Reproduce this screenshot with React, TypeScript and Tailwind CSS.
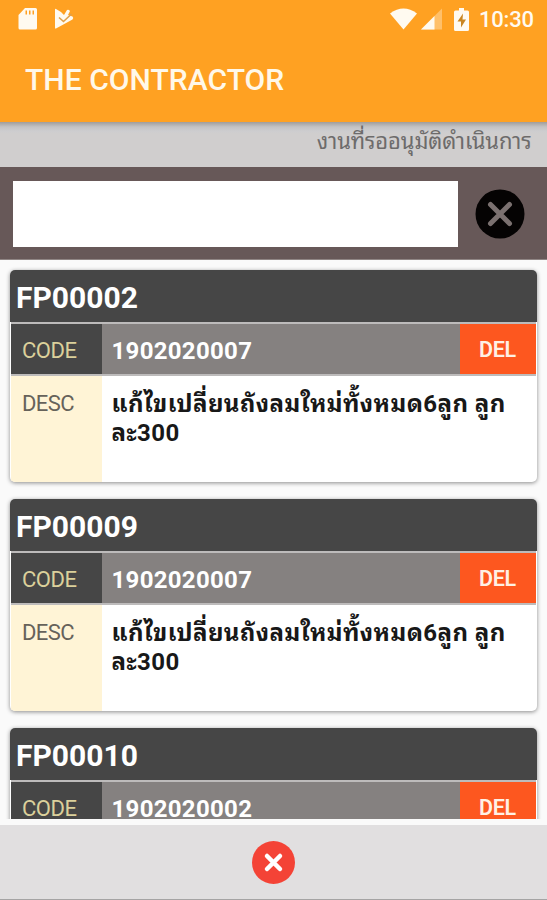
import React, { useState } from 'react';

interface Job {
  id: string;
  code: string;
  desc: string[];
}

const initialJobs: Job[] = [
  { id: 'FP00002', code: '1902020007', desc: ['แก้ไขเปลี่ยนถังลมใหม่ทั้งหมด6ลูก ลูก', 'ละ300'] },
  { id: 'FP00009', code: '1902020007', desc: ['แก้ไขเปลี่ยนถังลมใหม่ทั้งหมด6ลูก ลูก', 'ละ300'] },
  { id: 'FP00010', code: '1902020002', desc: ['แก้ไขเปลี่ยนถังลมใหม่ทั้งหมด6ลูก ลูก', 'ละ300'] },
];

const StatusBar: React.FC = () => (
  <div className="flex h-[38px] items-center pr-3.5 pl-[18px] text-[#fffaf0]">
    <svg className="h-[22px] w-[19px]" viewBox="0 0 19 22" fill="currentColor">
      <path fillRule="evenodd" d="M7 0h10.500a1.500 1.500 0 0 1 1.500 1.500v18.500a1.500 1.500 0 0 1-1.500 1.500H2A1.500 1.500 0 0 1 .5 20V7zM7.500 2.500v4H9v-4zM11 2.500v4h1.500v-4zM14.500 2.500v4H16v-4z" />
    </svg>
    <svg className="ml-[17px] h-[22px] w-5" viewBox="0 0 20 22" fill="none">
      <path fill="currentColor" d="M1 1.500Q1 .5 2 1l5 3 3 3 3-5q1-.7 2 0l1 1-2 4 4.500 1.500q1.500 1.500 0 3L2 20.500q-1 .5-1-1z" />
      <path d="M5 9.500l4.500 4L17.500 6" stroke="#e0a04a" strokeWidth="1.600" />
    </svg>
    <svg className="ml-auto h-[22px] w-[27px]" viewBox="0 0 27 22" fill="currentColor">
      <path d="M0 5.500Q13.500-4.500 27 5.500L13.500 21.500z" />
    </svg>
    <svg className="ml-1 h-[22px] w-[21px]" viewBox="0 0 21 22" fill="currentColor">
      <path opacity=".35" d="M21 .5V21.500H0z" />
      <path d="M13.500 8V21.500H0z" />
    </svg>
    <svg className="ml-3 h-[23px] w-[15px]" viewBox="0 0 15 23">
      <path fill="currentColor" d="M5 0h5v2.500h3.500q1.500 0 1.500 1.500v17.500q0 1.500-1.500 1.500h-12Q0 23 0 21.500V4q0-1.500 1.500-1.500H5z" />
      <path fill="#c98520" d="M9 5.500L3.500 13.500H7v6l5-8H8.500z" />
    </svg>
    <span className="ml-2.5 w-[54px] text-[22px] font-medium tracking-[-0.2px] whitespace-nowrap">10:30</span>
  </div>
);

const JobCard: React.FC<{ job: Job; onDelete: () => void }> = ({ job, onDelete }) => (
  <div className="mb-[17px] h-[212px] shrink-0 overflow-hidden rounded-[5px] bg-white shadow-[0_1px_4px_rgba(0,0,0,0.45)]">
    <div className="flex h-[52px] items-center bg-[#464646] pt-0.5 pl-1.5 text-[30px] font-bold text-white">
      {job.id}
    </div>
    <div className="mx-px flex h-[54px] items-stretch border-y-2 border-[#bdbbbb]">
      <div className="flex w-[91px] items-center bg-[#464646] pt-[3px] pl-[11px] text-[22px] tracking-[-0.5px] text-[#dbd09b]">CODE</div>
      <div className="flex flex-1 items-center bg-[#858180] pt-1 pl-[9.500px] text-[24px] font-bold tracking-[0.3px] text-white">{job.code}</div>
      <button onClick={onDelete}
        className="flex w-[76px] items-center justify-center bg-[#fd571f] pt-[3px] pr-px text-[21.500px] font-semibold tracking-[-0.3px] text-[#fff0e4]">
        DEL
      </button>
    </div>
    <div className="mx-px flex h-[106px]">
      <div className="w-[91px] bg-[#fff4d6] pt-[13px] pl-[11px] text-[22px] leading-[30px] tracking-[-0.6px] text-[#66625a]">DESC</div>
      <div className="flex-1 pt-3.5 pl-[9.500px] text-[24px] leading-[29px] font-bold tracking-[0.42px] whitespace-nowrap text-[#181818]">
        {job.desc.map(line => <p key={line}>{line}</p>)}
      </div>
    </div>
  </div>
);

const App: React.FC = () => {
  const [jobs, setJobs] = useState(initialJobs);
  const [query, setQuery] = useState('');

  const handleDelete = (id: string) => setJobs(jobs.filter(j => j.id !== id));
  const visible = jobs.filter(j => j.id.includes(query) || j.code.includes(query));

  return (
    <div className="flex h-[900px] w-[547px] flex-col overflow-hidden bg-[#fafafa] font-[Roboto,'Noto_Sans_Thai_Looped','Noto_Looped_Thai','Loma','Waree','Droid_Sans_Thai','Noto_Sans_Thai','Noto_Sans',sans-serif]">
      <header className="h-[122px] shrink-0 bg-[#ffa122]">
        <StatusBar />
        <h1 className="pt-5 pl-[25px] text-[30px] leading-[44px] font-medium tracking-[0.05px] text-[#fff8e9]">THE CONTRACTOR</h1>
      </header>

      <div className="h-[45px] shrink-0 bg-[linear-gradient(#a09d9b,#c4c3c4_5px,#cdcdcf_9px,#d0cece_12px)] pt-[5px] pr-[15.500px] text-right text-[22px] leading-[30px] tracking-[-0.12px] text-[#6d6b6b]">
        งานที่รออนุมัติดำเนินการ
      </div>

      <div className="flex h-[93px] shrink-0 items-center border-b border-[#8f8584] bg-[#675858] pl-[13px]">
        <input value={query} onChange={e => setQuery(e.target.value)}
          className="mt-px h-[66px] w-[445px] bg-white px-3 text-[24px] outline-none" />
        <button onClick={() => setQuery('')} className="mt-px ml-[17px]">
          <svg className="h-[50px] w-[50px]" viewBox="0 0 50 50">
            <circle cx="25" cy="25" r="24.500" fill="#050303" />
            <path d="M15.500 15.500l19 19M34.500 15.500l-19 19" stroke="#7b7170" strokeWidth="5" strokeLinecap="round" />
          </svg>
        </button>
      </div>

      <main className="flex h-[559px] shrink-0 flex-col overflow-hidden px-2.5 pt-2.5">
        {visible.map(job => <JobCard key={job.id} job={job} onDelete={() => handleDelete(job.id)} />)}
      </main>

      <footer className="flex flex-1 items-center justify-center border-t-[6px] border-b border-t-[#fafafa] border-b-[#a5a4a4] bg-[#e1dfe0]">
        <svg className="h-[43px] w-[43px]" viewBox="0 0 43 43">
          <circle cx="21.500" cy="21.500" r="21.500" fill="#f44336" />
          <path d="M15 15l13 13M28 15l-13 13" stroke="#fff" strokeWidth="4.500" strokeLinecap="round" />
        </svg>
      </footer>
    </div>
  );
};

export default App;
